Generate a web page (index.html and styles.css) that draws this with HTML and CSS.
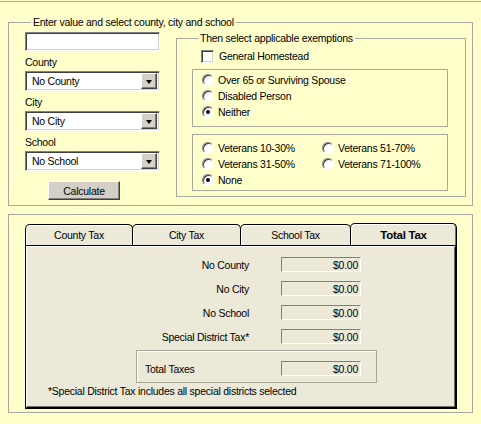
FILE: index.html
```html
<!DOCTYPE html>
<html lang="en">
<head>
  <meta charset="UTF-8">
  <title>Property Tax Estimator</title>
  <link rel="stylesheet" href="styles.css">
</head>
<body>
  <div class="page">
    <fieldset class="group main">
      <legend>Enter value and select county, city and school</legend>
      <div class="cols">
        <div class="left">
          <input type="text" class="text" value="">

          <label>County</label>
          <div class="combo"><span>No County</span><span class="drop"></span></div>

          <label>City</label>
          <div class="combo"><span>No City</span><span class="drop"></span></div>

          <label>School</label>
          <div class="combo"><span>No School</span><span class="drop"></span></div>

          <button class="btn">Calculate</button>
        </div>

        <fieldset class="group exempt">
          <legend>Then select applicable exemptions</legend>
          <div class="check"><span class="checkbox"></span>General Homestead</div>

          <div class="box g1">
            <div class="opt"><span class="radio"></span>Over 65 or Surviving Spouse</div>
            <div class="opt"><span class="radio"></span>Disabled Person</div>
            <div class="opt"><span class="radio on"></span>Neither</div>
          </div>

          <div class="box g2">
            <div class="opt"><span class="radio"></span>Veterans 10-30%</div>
            <div class="opt"><span class="radio"></span>Veterans 51-70%</div>
            <div class="opt"><span class="radio"></span>Veterans 31-50%</div>
            <div class="opt"><span class="radio"></span>Veterans 71-100%</div>
            <div class="opt"><span class="radio on"></span>None</div>
          </div>
        </fieldset>
      </div>
    </fieldset>

    <div class="results">
      <div class="tabs">
        <div class="tab t1">County Tax</div>
        <div class="tab t2">City Tax</div>
        <div class="tab t3">School Tax</div>
        <div class="tab t4 active">Total Tax</div>
      </div>
      <div class="panel">
        <div class="row"><span class="lbl">No County</span><span class="val">$0.00</span></div>
        <div class="row"><span class="lbl">No City</span><span class="val">$0.00</span></div>
        <div class="row"><span class="lbl">No School</span><span class="val">$0.00</span></div>
        <div class="row"><span class="lbl">Special District Tax*</span><span class="val">$0.00</span></div>

        <div class="total">
          <span class="tlbl">Total Taxes</span><span class="val">$0.00</span>
        </div>

        <p class="note">*Special District Tax includes all special districts selected</p>
      </div>
    </div>
  </div>
</body>
</html>
```

FILE: styles.css
```css
body {
  margin: 0;
  background: #ffffcc;
  font-family: 'Liberation Sans', Arial, sans-serif;
  font-size: 10.5px;
  letter-spacing: -0.25px;
  color: #000;
}

.page {
  margin-top: 1px;
  border-top: 1px solid #a8a79c;
  padding: 14px 8px 0 8px;
}

fieldset.group {
  margin: 0;
  border: 1px solid #a8a79c;
  min-width: 0;
  box-sizing: border-box;
}

fieldset.group legend {
  padding: 0 2px;
  margin-left: 6px;
  line-height: 13px;
}

.main {
  width: 465px;
  padding: 3px 6px 5px 16px;
}

.cols {
  display: flex;
  align-items: flex-start;
  gap: 16px;
}

.left {
  width: 135px;
  display: flex;
  flex-direction: column;
}

.left label {
  display: block;
  line-height: 13px;
  margin: 5px 0 2px;
}

.text {
  width: 135px;
  height: 19px;
  box-sizing: border-box;
  margin: 0;
  padding: 0 3px;
  border: 1px solid;
  border-color: #808080 #fff #fff #808080;
  box-shadow: inset 1px 1px 0 #404040, inset -1px -1px 0 #d4d0c8;
  background: #fff;
  font: 11px 'Liberation Sans', Arial, sans-serif;
  outline: none;
}

.combo {
  height: 20px;
  box-sizing: border-box;
  border: 1px solid;
  border-color: #808080 #fff #fff #808080;
  box-shadow: inset 1px 1px 0 #404040, inset -1px -1px 0 #d4d0c8;
  background: #fff;
  display: flex;
  align-items: center;
  padding: 2px;
}

.combo span:first-child {
  flex: 1;
  padding-left: 4px;
}

.combo .drop {
  width: 16px;
  height: 16px;
  box-sizing: border-box;
  background: #d4d0c8;
  border: 1px solid;
  border-color: #fff #404040 #404040 #fff;
  box-shadow: inset -1px -1px 0 #808080;
  position: relative;
}

.combo .drop::after {
  content: "";
  position: absolute;
  left: 4px;
  top: 6px;
  border-left: 3.5px solid transparent;
  border-right: 3.5px solid transparent;
  border-top: 4px solid #000;
}

.btn {
  margin: 10px 0 0 23px;
  width: 72px;
  height: 19px;
  padding: 0;
  background: #d4d0c8;
  border: 1px solid;
  border-color: #fff #404040 #404040 #fff;
  box-shadow: inset -1px -1px 0 #808080;
  font: 10.5px 'Liberation Sans', Arial, sans-serif;
  letter-spacing: -0.25px;
  color: #000;
}

.exempt {
  width: 290px;
  padding: 4px 17px 5px 15px;
}

.check {
  display: flex;
  align-items: center;
  gap: 5px;
  margin-left: 9px;
  height: 14px;
}

.checkbox {
  width: 13px;
  height: 13px;
  box-sizing: border-box;
  background: #fff;
  border: 1px solid;
  border-color: #808080 #fff #fff #808080;
  box-shadow: inset 1px 1px 0 #404040, inset -1px -1px 0 #d4d0c8;
}

.box {
  border: 1px solid #a8a79c;
  margin-top: 6px;
}

.g1 {
  padding: 2px 0 6px 9px;
}

.g2 {
  margin-top: 7px;
  padding: 5px 0 2px 9px;
  display: grid;
  grid-template-columns: 120px 1fr;
}

.opt {
  height: 16px;
  display: flex;
  align-items: center;
  gap: 4px;
}

.radio {
  width: 12px;
  height: 12px;
  box-sizing: border-box;
  border-radius: 50%;
  background: #fff;
  border: 1px solid;
  border-color: #808080 #fff #fff #808080;
  box-shadow: inset 1px 1px 0 #404040;
  position: relative;
}

.radio.on::after {
  content: "";
  position: absolute;
  left: 3px;
  top: 3px;
  width: 4px;
  height: 4px;
  border-radius: 50%;
  background: #000;
}

.results {
  margin-top: 8px;
  width: 465px;
  height: 199px;
  box-sizing: border-box;
  border: 1px solid #a8a79c;
  padding: 9px 15px 3px 16px;
}

.tabs {
  display: flex;
  height: 21px;
}

.tab {
  box-sizing: border-box;
  height: 21px;
  background: #ece9d8;
  border: 1px solid #000;
  border-bottom: none;
  border-radius: 5px 5px 0 0;
  box-shadow: inset 1px 1px 0 #fff;
  text-align: center;
  line-height: 20px;
}

.tab + .tab {
  margin-left: -1px;
}

.t1 { width: 108px; }
.t2 { width: 109px; }
.t3 { width: 111px; }
.t4 { width: 107px; }

.tab.active {
  height: 22px;
  margin-top: -1px;
  margin-bottom: -1px;
  position: relative;
  z-index: 1;
  font-weight: bold;
  font-size: 11.5px;
  line-height: 23px;
  box-shadow: inset 1px 1px 0 #fff, inset -1px 0 0 #716f64;
}

.panel {
  height: 164px;
  box-sizing: border-box;
  background: #ece9d8;
  border: 1px solid #000;
  border-right-width: 2px;
  border-bottom-width: 2px;
  box-shadow: inset 1px 1px 0 #fff, inset -1px -1px 0 #716f64;
  padding-top: 11px;
}

.row {
  display: flex;
  align-items: center;
  height: 15px;
  margin-bottom: 9px;
}

.lbl {
  width: 223px;
  text-align: right;
  margin-right: 32px;
}

.val {
  width: 80px;
  height: 15px;
  box-sizing: border-box;
  border: 1px solid;
  border-color: #808080 #fff #fff #808080;
  text-align: right;
  padding-right: 2px;
  line-height: 14px;
}

.total {
  margin: -3px 0 0 110px;
  width: 241px;
  height: 33px;
  box-sizing: border-box;
  border: 1px solid #a8a79c;
  box-shadow: inset 1px 1px 0 #fff;
  display: flex;
  align-items: center;
  padding: 4px 0 0 8px;
}

.tlbl {
  width: 136px;
}

.note {
  margin: 2px 0 0 22px;
  line-height: 13px;
}
```
